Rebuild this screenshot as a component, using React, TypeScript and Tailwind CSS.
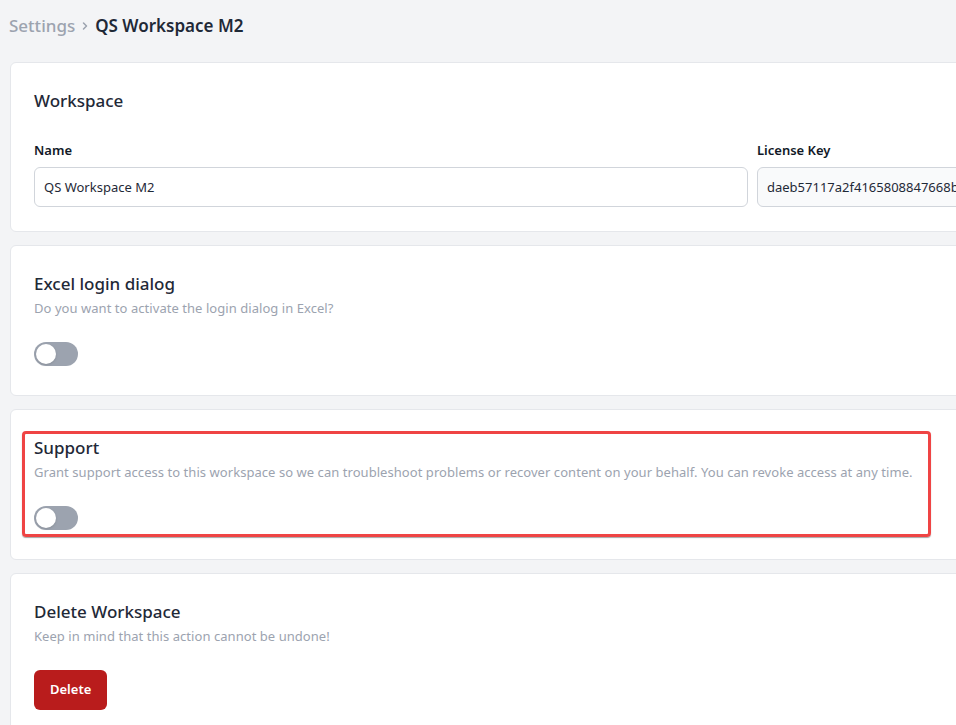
import React from 'react';

const font = { fontFamily: '"Noto Sans", "Open Sans", sans-serif' };

const Toggle = () => (
  <button className="relative w-[44px] h-[24px] rounded-full bg-[#9ca3af]">
    <span className="absolute left-[2px] top-[2px] w-[20px] h-[20px] rounded-full bg-white shadow-sm" />
  </button>
);

const Card = ({ children, className = '' }: { children: React.ReactNode; className?: string }) => (
  <div className={`relative bg-white border border-[#e5e7eb] rounded-md px-[23px] pt-6 ${className}`}>
    {children}
  </div>
);

const Heading = ({ title, desc }: { title: string; desc: string }) => (
  <div>
    <h3 className="text-[17px] leading-7 font-medium text-[#1f2937]">{title}</h3>
    <p className="text-[13px] leading-5 text-[#9ca3af] tracking-[0.05px]">{desc}</p>
  </div>
);

export default function App() {
  return (
    <div className="w-[956px] h-[725px] overflow-hidden bg-[#f3f4f6]" style={font}>
      <div className="w-[1495px] pl-[10px]">
        <div className="flex items-center h-[50px] gap-1 text-[17px] pt-[1px] -ml-[1px]">
          <span className="text-[#9ca3af] font-medium">Settings</span>
          <svg width="12" height="12" viewBox="0 0 12 12" className="text-[#9ca3af]">
            <path d="M4.5 3 7.5 6 4.5 9" fill="none" stroke="currentColor" strokeWidth="1.5" strokeLinecap="round" strokeLinejoin="round" />
          </svg>
          <span className="text-[#1f2937] font-semibold">QS Workspace M2</span>
        </div>

        <div className="flex flex-col gap-[13px] pt-[12px]">
          <Card className="pb-6">
            <h3 className="text-[17px] leading-7 font-medium text-[#1f2937]">Workspace</h3>
            <div className="grid grid-cols-2 gap-[9px] mt-[25px]">
              <div>
                <label className="block text-[13px] leading-5 font-semibold text-[#111827] mb-[7px]">Name</label>
                <input
                  readOnly
                  value="QS Workspace M2"
                  className="w-full h-[40px] px-[9px] text-[13px] text-[#1f2937] border border-[#d1d5db] rounded-md bg-white outline-none"
                  style={font}
                />
              </div>
              <div>
                <label className="block text-[13px] leading-5 font-semibold text-[#111827] mb-[7px]">License Key</label>
                <input
                  readOnly
                  value="daeb57117a2f4165808847668b3c1e2f"
                  className="w-full h-[40px] px-[9px] text-[13px] text-[#1f2937] border border-[#d1d5db] rounded-md bg-[#f9fafb] outline-none"
                  style={font}
                />
              </div>
            </div>
          </Card>

          <Card className="pb-[29px]">
            <Heading title="Excel login dialog" desc="Do you want to activate the login dialog in Excel?" />
            <div className="mt-6 flex">
              <Toggle />
            </div>
          </Card>

          <Card className="pb-[29px]">
            <Heading
              title="Support"
              desc="Grant support access to this workspace so we can troubleshoot problems or recover content on your behalf. You can revoke access at any time."
            />
            <div className="mt-6 flex">
              <Toggle />
            </div>
            <div className="absolute left-[11px] top-[21px] w-[909px] h-[106px] border-[3px] border-[#ef4444] rounded-[4px] pointer-events-none shadow-[0_1px_1px_rgba(0,0,0,0.35)]" />
          </Card>

          <Card className="pb-8">
            <Heading title="Delete Workspace" desc="Keep in mind that this action cannot be undone!" />
            <button className="mt-6 h-[40px] px-4 rounded-md bg-[#b91c1c] text-white text-[13px] font-semibold" style={font}>
              Delete
            </button>
          </Card>
        </div>
      </div>
    </div>
  );
}
